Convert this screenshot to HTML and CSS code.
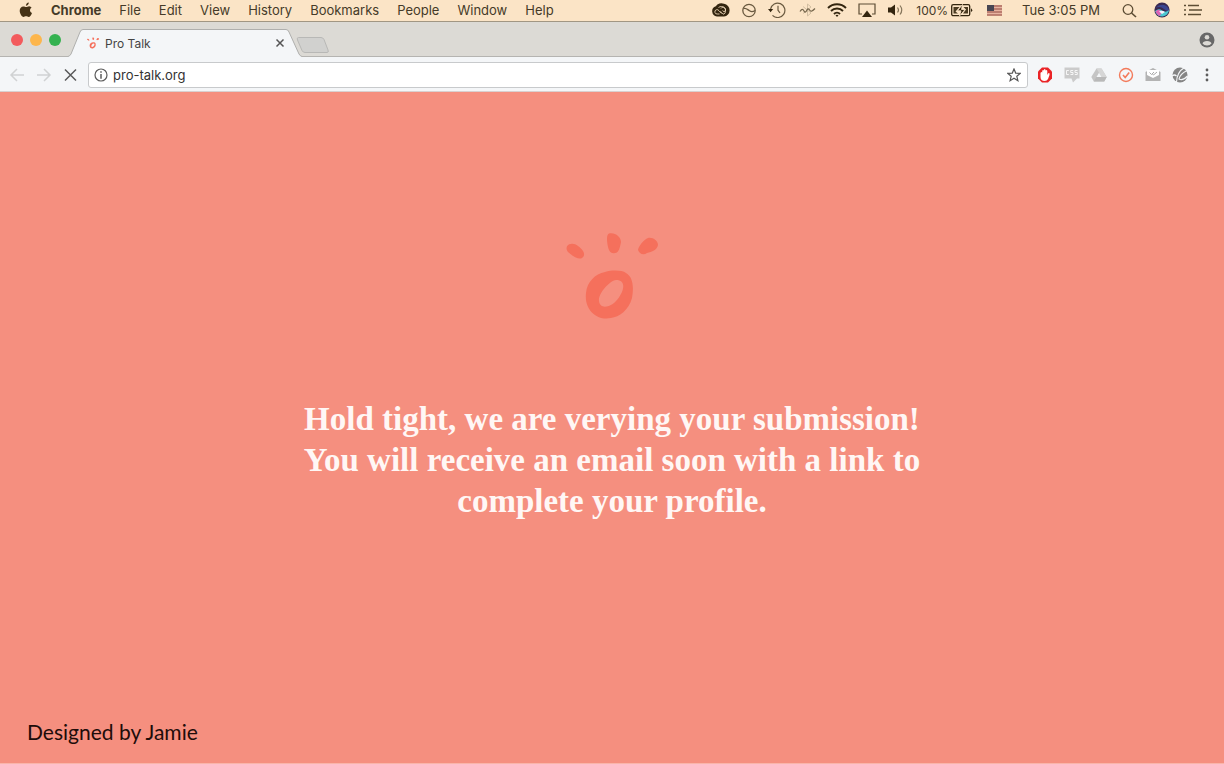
FILE: index.html
```html
<!DOCTYPE html>
<html lang="en">
<head>
  <meta charset="UTF-8">
  <meta name="viewport" content="width=device-width, initial-scale=1.0">
  <title>Pro Talk</title>
  <link rel="stylesheet" href="styles.css">
</head>
<body>
  <!-- Mac menu bar -->
  <header class="menubar">
    <nav class="menus">
      <svg class="apple" width="14" height="16" viewBox="0 0 14 16"><path d="M9.8 0.500C9.900 2.300 8.500 3.800 6.900 3.800C6.800 2.200 8.200 0.700 9.800 0.500ZM12.500 5.700C10.300 7.200 10.700 9.900 13 10.900C12.300 12.900 11 14.900 9.700 14.900C8.700 14.900 8.300 14.300 7.100 14.300C5.900 14.300 5.400 14.900 4.500 14.900C2.700 14.900 0.700 11.500 0.700 8.800C0.700 6 2.400 4.400 4.300 4.400C5.500 4.400 6.400 5.100 7.100 5.100C7.900 5.100 8.900 4.300 10.200 4.300C11.100 4.400 12 4.900 12.500 5.700Z" fill="#453216"/></svg>
      <button class="menu app">Chrome</button>
      <button class="menu">File</button>
      <button class="menu">Edit</button>
      <button class="menu">View</button>
      <button class="menu">History</button>
      <button class="menu">Bookmarks</button>
      <button class="menu">People</button>
      <button class="menu">Window</button>
      <button class="menu">Help</button>
    </nav>

    <div class="status">
      <svg width="20" height="16" viewBox="0 0 20 16"><path d="M6 14.500A5.300 5.300 0 0 1 4.800 4.200A6.500 6.500 0 0 1 13 1.800A6.400 6.400 0 0 1 13 14.500Z" fill="#33250f"/><path d="M10.500 11.500L8 8.800A2.200 2.200 0 1 0 6.300 12H8.500M7.500 5.500A4.300 4.300 0 1 1 13 12.200C11.500 12 10.500 10.500 9.500 9.300M10 6.500A2.400 2.400 0 1 1 13 9.800L11.500 8.500" fill="none" stroke="#fbe4c6" stroke-width="0.800"/></svg>
      <svg width="14" height="16" viewBox="0 0 14 16"><circle cx="7" cy="8.500" r="6.200" fill="none" stroke="#6a5a40" stroke-width="1.300"/><path d="M1.500 6.500C4 5.500 5.500 7.500 7.500 8.800S11.500 9.500 13 8.500" fill="none" stroke="#6a5a40" stroke-width="1.300"/></svg>
      <svg width="20" height="16" viewBox="0 0 20 16"><path d="M3.600 7A7.200 7.200 0 1 1 5.500 13.300M11 3.800V8.200L13 11" fill="none" stroke="#6a5a40" stroke-width="1.200"/><path d="M1 7H6.200L3.600 10.200Z" fill="#33250f"/></svg>
      <svg width="18" height="16" viewBox="0 0 18 16"><path d="M5 4.500L13 11L9.500 14V2L13 5L5 11.500" fill="none" stroke="#d3bfa2"/><path d="M2 9.500C4 6.500 5 7 6 9S8 10 9 8S11 7 12 8.500S14.500 9 17 6.500" fill="none" stroke="#75664c" stroke-width="1.200"/></svg>
      <svg width="20" height="16" viewBox="0 0 20 16"><g fill="none" stroke="#33250f" stroke-width="1.900"><path d="M1 6C6 1 14 1 19 6"/><path d="M4 9C7.300 5.600 12.700 5.600 16 9"/><path d="M7 12C8.700 10.200 11.300 10.200 13 12"/></g><path d="M8.500 13.300Q10 12 11.500 13.300L10 15Z" fill="#33250f"/></svg>
      <svg width="18" height="16" viewBox="0 0 18 16"><path d="M4 12H1V2H17V12H14" fill="none" stroke="#5d4d34" stroke-width="1.200"/><path d="M9 8.500L14 15H4Z" fill="#33250f"/></svg>
      <svg width="18" height="16" viewBox="0 0 18 16"><path d="M1 5.500H4L8 2.500V13.500L4 10.500H1Z" fill="#33250f"/><path d="M10.500 5.500Q12.500 8 10.500 10.500M13 3.500Q16.500 8 13 12.500" fill="none" stroke="#85755b" stroke-width="1.200"/></svg>
      <div class="power">
        <span class="percent">100%</span>
        <svg width="22" height="16" viewBox="0 0 22 16"><rect x="0.700" y="2.700" width="18" height="11" rx="1.500" fill="none" stroke="#33250f" stroke-width="1.300"/><path d="M2.500 5H8.500L4.500 9.500L7 11.500H2.500ZM17 11.500H12L15 7.500L12.500 5H17Z" fill="#4a3b22"/><path d="M11.500 2.500L6.500 8.800H10L8.500 14L14 7.500H10.500Z" fill="#33250f" stroke="#fbe4c6" stroke-width="0.800"/><path d="M20 6.300Q22.500 8.200 20 10Z" fill="#33250f"/></svg>
      </div>
      <svg width="20" height="16" viewBox="0 0 20 16"><rect x="3" y="3" width="15" height="10.500" fill="#e7b3a0"/><path d="M3 4H18M3 7H18M3 10H18M3 13H18" stroke="#af6e60" stroke-width="1.300"/><rect x="3" y="3" width="7" height="6" fill="#484653"/></svg>
      <time class="clock">Tue 3:05 PM</time>
      <svg width="22" height="16" viewBox="0 0 22 16"><circle cx="10" cy="7.500" r="4.800" fill="none" stroke="#5d4d34" stroke-width="1.300"/><path d="M13.500 11L18 15" stroke="#5d4d34" stroke-width="1.600"/></svg>
      <svg width="22" height="16" viewBox="0 0 22 16"><circle cx="11" cy="8" r="7.600" fill="#3a2950"/><path d="M4.500 6Q9 3.500 13 7T18 8Q17 4 13 3Q8 2 4.500 6Z" fill="#3b4590"/><path d="M4 9Q8 6 11 8.500Q14 11 18.300 8Q17 13.500 11.500 14.500Q6 14.500 4 9Z" fill="#4ac8d1"/><path d="M4.500 9.500Q7.500 6.500 9.500 9Q11 12.500 8 14Q5.500 12 4.500 9.500Z" fill="#dd61b5"/><path d="M8 9.500Q11 8 14 10L11 12Z" fill="#f4f2fc"/></svg>
      <svg width="18" height="16" viewBox="0 0 18 16"><path d="M4 3.500H15M5 8H18M4 12.500H17M0 3.500H2M0 8H2M0 12.500H2" stroke="#5d4d34" stroke-width="1.400"/></svg>
    </div>
  </header>

  <!-- Tab strip -->
  <div class="tabstrip">
    <div class="lights">
      <span class="light red"></span>
      <span class="light yellow"></span>
      <span class="light green"></span>
    </div>
    <div class="tab">
      <svg class="tab-shape" viewBox="0 0 234 28" preserveAspectRatio="none"><path d="M0 27.500Q2 27 3 25L12 3Q13 0.500 15 0.500H218Q220 0.500 221 3L231 25Q232 27 234 27.500V28H0Z" fill="#f4f6f8"/><path d="M0 27.500Q2 27 3 25L12 3Q13 0.500 15 0.500H218Q220 0.500 221 3L231 25Q232 27 234 27.500" fill="none" stroke="#afafad"/></svg>
      <svg class="favicon" viewBox="0 0 92 86"><use href="#mark"/></svg>
      <span class="tab-title">Pro Talk</span>
      <button class="tab-close" aria-label="Close tab"><svg width="10" height="10" viewBox="0 0 10 10"><path d="M1.500 1.500L8.500 8.500M8.500 1.500L1.500 8.500" stroke="#555" stroke-width="1.500"/></svg></button>
    </div>
    <button class="new-tab" aria-label="New tab"><svg width="34" height="18" viewBox="0 0 34 18"><path d="M2.500 1.500H25Q27 1.500 28 3.500L32 14Q33 16.500 31 16.500H9Q7 16.500 6 14.500L1.500 4Q0.500 1.500 2.500 1.500Z" fill="#d1d1cf" stroke="#b8b8b6"/></svg></button>
    <button class="profile" aria-label="Profile"><svg width="16" height="16" viewBox="0 0 16 16"><circle cx="8" cy="8" r="7.500" fill="#686868"/><circle cx="8" cy="5.300" r="2.300" fill="#dcdad5"/><path d="M3.500 11.500Q4 9 8 9T12.500 11.500Q11 13.500 8 13.500T3.500 11.500Z" fill="#dcdad5"/></svg></button>
  </div>

  <!-- Toolbar -->
  <div class="toolbar">
    <div class="icons">
      <button aria-label="Back" disabled><svg viewBox="0 0 16 16"><path d="M15 8H2.500M8 2L2 8L8 14" fill="none" stroke="#d0d2d3" stroke-width="1.500"/></svg></button>
      <button aria-label="Forward" disabled><svg viewBox="0 0 16 16"><path d="M1 8H13.500M8 2L14 8L8 14" fill="none" stroke="#d0d2d3" stroke-width="1.500"/></svg></button>
      <button aria-label="Stop"><svg viewBox="0 0 16 16"><path d="M2 2.500L13 13.500M13 2.500L2 13.500" stroke="#595959" stroke-width="1.500"/></svg></button>
    </div>
    <div class="omnibox">
      <svg width="14" height="14" viewBox="0 0 14 14"><circle cx="7" cy="7" r="6" fill="none" stroke="#5c5c5c" stroke-width="1.200"/><path d="M7 3.200V4.800M7 6V10.800" stroke="#5c5c5c" stroke-width="1.500"/></svg>
      <input class="url" type="text" value="pro-talk.org" aria-label="Address">
      <button aria-label="Bookmark"><svg width="14" height="14" viewBox="0 0 14 14"><path d="M7 1L8.700 5.100L13.200 5.400L9.800 8.300L10.900 12.700L7 10.300L3.100 12.700L4.200 8.300L0.800 5.400L5.300 5.100Z" fill="none" stroke="#555" stroke-width="1.200"/></svg></button>
    </div>
    <div class="icons">
      <button aria-label="Ad blocker"><svg viewBox="0 0 16 16"><path d="M5 0.500H11L15 4.500V11.500L11 15.500H5L1 11.500V4.500Z" fill="#ea2427"/><path d="M3.500 6Q4.300 4.500 5.200 5.500V3.700Q6 2.300 6.900 3.400V2.700Q7.700 1.500 8.500 2.700V3.400Q9.500 2.300 10.300 3.700V8L11.300 6.300Q13 5.500 12.500 8L11 12Q10 14 7.800 14Q3.500 14 3.500 10Z" fill="#fff"/></svg></button>
      <button aria-label="CSS viewer"><svg viewBox="0 0 16 16"><path d="M0.500 0.500H15.500V11.500H13L9 15.500L7.500 11.500H0.500Z" fill="#cbcbcb"/><path d="M4.800 3.500H2.500V7.500H4.800M9.200 3.500H6.700V5.500H9V7.500H6.500M13.500 3.500H11V5.500H13.300V7.500H10.800" fill="none" stroke="#f6f6f6"/></svg></button>
      <button aria-label="Drive"><svg viewBox="0 0 16 16"><path d="M5.500 1.500H10.500L15.700 10L13.200 14.500H2.800L0.300 10Z" fill="#c5c5c5"/><path d="M10.500 1.500L15.700 10H10.500L5.500 1.500Z" fill="#d6d6d6"/><path d="M8 5.800L10.500 10H5.500Z" fill="#f4f6f8"/><path d="M5.300 10H15.700L13.200 14.500H2.800Z" fill="#b9b9b9"/></svg></button>
      <button aria-label="Tasks"><svg viewBox="0 0 16 16"><circle cx="8" cy="8" r="6.500" fill="none" stroke="#f37b5c" stroke-width="1.400"/><path d="M5 8L7.200 10.500L11.200 5.500" fill="none" stroke="#f37b5c" stroke-width="1.600"/></svg></button>
      <button aria-label="Mail tracker"><svg viewBox="0 0 16 16"><path d="M0.500 5L8 1L15.500 5V14H0.500Z" fill="#b3b3b3"/><path d="M2 3H14V8L8 11L2 8Z" fill="#fff"/><path d="M4.500 5.500L6.500 7.500L9 5M7.500 7L8.500 8L12 5" fill="none" stroke="#aaa"/></svg></button>
      <button aria-label="Globe"><svg viewBox="0 0 16 16"><circle cx="8" cy="8" r="7.500" fill="#858585"/><path d="M12.500 0.500Q5 5 4.500 15M4.500 9Q2.500 7 0 9M15 3.500Q8 7 7 12Q11 14 15.500 9" fill="none" stroke="#f4f6f8" stroke-width="1.200"/></svg></button>
      <button aria-label="Chrome menu"><svg viewBox="0 0 16 16"><g fill="#5d5d5d"><circle cx="8" cy="3" r="1.400"/><circle cx="8" cy="8" r="1.400"/><circle cx="8" cy="13" r="1.400"/></g></svg></button>
    </div>
  </div>

  <!-- Page -->
  <main class="page">
    <svg class="logo" viewBox="0 0 92 86">
      <g id="mark" fill="#f5705c">
        <path d="M5 11C9 10 14 14 17 18C19 21 18 24 16 25C13 27 6 23 2 19C-1 15 1 11 5 11Z"/>
        <path d="M43 0.500C49-1 55 4 55 9C54 14 53 20 49 20C45 21 43 18 42 14C41 9 40 2 43 0.500Z"/>
        <path d="M82 5C87 4 92 8 92 12C91 17 86 19 81 20C77 23 73 20 72 17C72 14 78 6 82 5Z"/>
        <path fill-rule="evenodd" d="M39 39C46 37 56 37 60 40C67 44 68 54 66 65C63 77 53 84 45 85C31 88 18 77 20 60C21 49 29 41 39 39ZM50 47C43 48 32 61 33 68C34 77 45 74 50 68C57 61 62 47 50 47Z"/>
      </g>
    </svg>
    <h1 class="message">Hold tight, we are verying your submission!<br>You will receive an email soon with a link to<br>complete your profile.</h1>
    <p class="credit">Designed by Jamie</p>
  </main>
</body>
</html>
```
FILE: styles.css
```css
* {
  box-sizing: border-box;
}
body {
  margin: 0;
  min-height: 100vh;
  display: flex;
  flex-direction: column;
  font-family: Inter, Roboto, sans-serif;
  font-size: 13px;
  background: #f58f7f;
}
button {
  margin: 0;
  padding: 0;
  border: none;
  background: none;
  font: inherit;
  color: inherit;
}
svg {
  display: block;
  flex-shrink: 0;
}

/* Menu bar */
.menubar {
  display: flex;
  justify-content: space-between;
  height: 22px;
  padding: 0 22px 1px 19px;
  background: #fbe4c6;
  border-bottom: 1px solid #a19683;
  color: #453a28;
}
.menus, .status, .power {
  display: flex;
  align-items: center;
}
.menus {
  gap: 18px;
}
.app {
  font-weight: bold;
}
.status {
  gap: 11px;
}
.power {
  gap: 3px;
}
.percent {
  font-size: 12px;
}
.clock {
  padding: 0 7px;
}

/* Tab strip */
.tabstrip {
  display: flex;
  align-items: flex-end;
  height: 35px;
  padding: 1px 9px 0 11px;
  background: #dcdad5;
  border-bottom: 1px solid #b5b4b1;
}
.lights {
  display: flex;
  align-self: center;
  gap: 7px;
  width: 57px;
}
.light {
  width: 12px;
  height: 12px;
  border-radius: 50%;
}
.red {
  background: #f35b5d;
}
.yellow {
  background: #fdb64c;
}
.green {
  background: #35b250;
}
.tab {
  position: relative;
  display: flex;
  align-items: center;
  gap: 6px;
  width: 234px;
  height: 28px;
  margin-bottom: -1px;
  padding: 0 17px 0 19px;
  font-size: 12px;
  color: #444;
}
.tab-shape {
  position: absolute;
  left: 0;
  top: 0;
  width: 100%;
  height: 100%;
}
.favicon, .tab-title, .tab-close {
  position: relative;
}
.favicon {
  width: 12px;
  height: 12px;
}
.tab-close {
  margin-left: auto;
}
.new-tab {
  margin-left: -6px;
  align-self: center;
  padding-top: 10px;
}
.profile {
  align-self: center;
  margin-left: auto;
}

/* Toolbar */
.toolbar {
  display: flex;
  align-items: center;
  gap: 9px;
  height: 35px;
  padding: 1px 9px 0;
  background: #f4f6f8;
  border-bottom: 1px solid #d9d1d1;
}
.icons {
  display: flex;
  gap: 11px;
}
.icons svg {
  width: 16px;
  height: 16px;
}
.omnibox {
  flex: 1;
  display: flex;
  align-items: center;
  gap: 5px;
  height: 26px;
  padding: 0 6px 0 5px;
  background: #fff;
  border: 1px solid #c8cacc;
  border-radius: 3px;
}
.url {
  flex: 1;
  min-width: 0;
  padding: 0;
  border: none;
  outline: none;
  background: none;
  font: inherit;
  color: #333;
}

/* Page */
.page {
  flex: 1;
  display: flex;
  flex-direction: column;
  align-items: center;
  padding: 141px 27px 16px;
  border-bottom: 1px solid #f9b5aa;
}
.logo {
  width: 92px;
  height: 86px;
}
.message {
  margin: 80px 0;
  font-family: "Liberation Serif", serif;
  font-size: 33px;
  line-height: 41px;
  font-weight: bold;
  text-align: center;
  color: #fff7f5;
}
.credit {
  align-self: flex-start;
  margin: auto 0 0;
  font-family: Lato, sans-serif;
  font-size: 21px;
  line-height: 30px;
  color: #200c0a;
}
```
